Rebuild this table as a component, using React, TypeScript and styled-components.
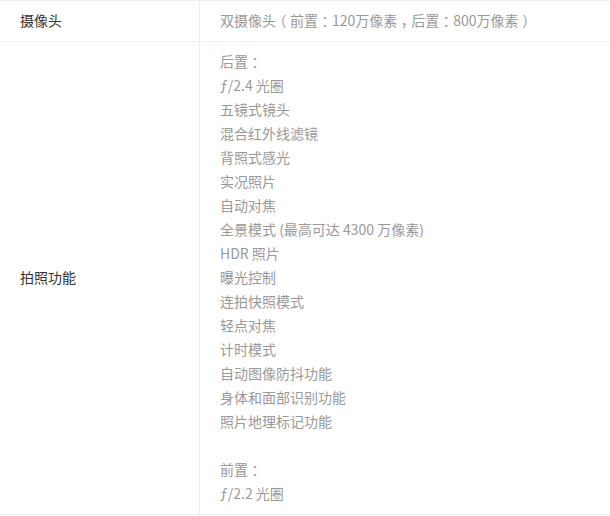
import React from "react";
import styled, { createGlobalStyle } from "styled-components";

const Global = createGlobalStyle`
  html, body { margin: 0; padding: 0; background: #fff; }
  body { font-family: "Noto Sans CJK SC", "Noto Sans", sans-serif; }
`;

const Table = styled.div`
  display: grid;
  grid-template-columns: 200px 1fr;
  width: 610px;
  border-top: 1px solid #efefef;
  font-size: 14px;
  line-height: 24px;
`;

const Label = styled.div`
  display: flex;
  align-items: center;
  padding: 7px 20px 9px;
  color: #333;
  border-right: 1px solid #efefef;
  border-bottom: 1px solid #efefef;
`;

const Value = styled.div`
  padding: 7px 20px 9px;
  color: #999;
  border-bottom: 1px solid #efefef;
`;

const Line = styled.div`
  height: 24px;
  white-space: nowrap;
`;

const Punct = styled.span`
  display: inline-block;
  width: 1em;
  text-align: center;
  font-feature-settings: "halt" 1;
`;

const renderText = (s: string) =>
  s.split(/([：，（）])/).map((part, i) =>
    /^[：，（）]$/.test(part) ? <Punct key={i}>{part}</Punct> : part
  );

const rows: { label: string; lines: string[] }[] = [
  { label: "摄像头", lines: ["双摄像头（前置：120万像素，后置：800万像素）"] },
  {
    label: "拍照功能",
    lines: [
      "后置：",
      "ƒ/2.4 光圈",
      "五镜式镜头",
      "混合红外线滤镜",
      "背照式感光",
      "实况照片",
      "自动对焦",
      "全景模式 (最高可达 4300 万像素)",
      "HDR 照片",
      "曝光控制",
      "连拍快照模式",
      "轻点对焦",
      "计时模式",
      "自动图像防抖功能",
      "身体和面部识别功能",
      "照片地理标记功能",
      "",
      "前置：",
      "ƒ/2.2 光圈",
    ],
  },
];

export default function App() {
  return (
    <>
      <Global />
      <Table lang="zh-CN">
        {rows.map((r) => (
          <React.Fragment key={r.label}>
            <Label>{r.label}</Label>
            <Value>
              {r.lines.map((l, i) => (
                <Line key={i}>{renderText(l)}</Line>
              ))}
            </Value>
          </React.Fragment>
        ))}
      </Table>
    </>
  );
}
